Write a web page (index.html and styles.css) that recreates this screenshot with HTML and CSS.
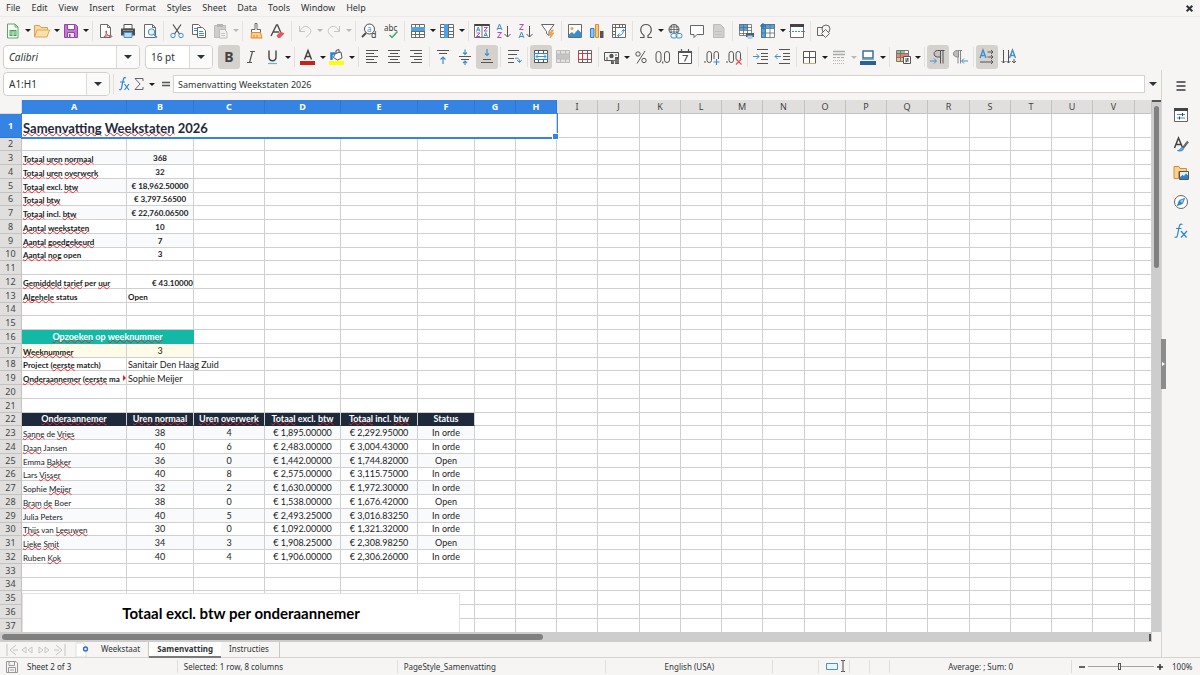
FILE: index.html
```html
<!DOCTYPE html>
<html lang="nl">
<head>
<meta charset="utf-8">
<meta name="viewport" content="width=device-width, initial-scale=1">
<title>Samenvatting</title>
<link rel="stylesheet" href="styles.css">
</head>
<body>
<div class="app">
  <nav class="menubar" aria-label="Menu">
    <button>File</button><button>Edit</button><button>View</button><button>Insert</button><button>Format</button><button>Styles</button><button>Sheet</button><button>Data</button><button>Tools</button><button>Window</button><button>Help</button>
    <button class="close" aria-label="Close document"><svg viewBox="0 0 8 8"><path d="M1.500 1.500l5 5M6.500 1.500l-5 5" stroke="#2e3436" stroke-width="1.800"/></svg></button>
  </nav>

  <div class="toolbar" role="toolbar" aria-label="Standard">
    <button class="tool" aria-label="New"><svg viewBox="0 0 16 16"><path d="M2.500 1h7.500l3 3v11h-10.500z" fill="#fff" stroke="#4fae5d"/><path d="M10 1v3h3" stroke="#4fae5d"/><path d="M4.500 7h7v6h-7z" fill="#43a352"/><path d="M5 9h6M5 11h6M8 9v4" stroke="#c9f0cd"/></svg></button><button class="drop" aria-label="New options"></button>
    <button class="tool" aria-label="Open"><svg viewBox="0 0 16 16"><path d="M.5 14V2.500h5l1.500 2h6.500V7" fill="#fbd9a0" stroke="#dfa04c"/><path d="M.5 14L3 7h12.500l-2.500 7z" fill="#fbe0af" stroke="#e3a652"/></svg></button><button class="drop" aria-label="Open options"></button>
    <button class="tool" aria-label="Save"><svg viewBox="0 0 16 16"><path d="M1.500 1.500h11l2 2v11h-13z" fill="#c178d2" stroke="#97469f"/><path d="M4.500 1.500h7v5h-7z" fill="#fff" stroke="#97469f"/><path d="M4.500 9.500h7v5h-7z" fill="#f5eaf8" stroke="#97469f"/><path d="M6 11h1.500v3H6z" fill="#97469f"/></svg></button><button class="drop" aria-label="Save options"></button>
    <span class="sep"></span>
    <button class="tool" aria-label="Export as PDF"><svg viewBox="0 0 16 16"><path d="M2.500 1.500h7l3 3v10h-10z" fill="#fff" stroke="#6a6a6a"/><path d="M9.500 1.500v3h3" stroke="#6a6a6a"/><path d="M6 14c2-1.500 3-5 2.500-6-.8-.5-1.200.8 0 2.500s3 3.500 5 3.300c1.500-.3 0-1.500-2-1.300S7.500 13 6 14z" stroke="#d34a50" fill="#fbe1e1"/></svg></button>
    <button class="tool" aria-label="Print"><svg viewBox="0 0 16 16"><path d="M4 1.500h8V6H4z" fill="#fff" stroke="#555"/><path d="M1 5.500h14v7H1z" fill="#4a4f52"/><path d="M4 9.500h8v5H4z" fill="#b7dcf6" stroke="#4a90c6"/><path d="M3 7.500h10" stroke="#8b9093"/></svg></button>
    <button class="tool" aria-label="Print preview"><svg viewBox="0 0 16 16"><path d="M2.500 1.500h8l3 3v10h-11z" fill="#fff" stroke="#6a6a6a"/><path d="M10.500 1.500v3h3" stroke="#6a6a6a"/><circle cx="9.500" cy="9" r="3.200" fill="#e3f2fd" stroke="#3d8fd1"/><path d="M12 11.500l3 3" stroke="#3d8fd1" stroke-width="1.500"/></svg></button>
    <span class="sep"></span>
    <button class="tool" aria-label="Cut"><svg viewBox="0 0 16 16"><path d="M4 1.500l6.500 9.500M12 1.500L5.500 11" stroke="#4d4d4d" stroke-width="1.200"/><circle cx="4" cy="12.500" r="2.200" stroke="#3d8fd1"/><circle cx="12" cy="12.500" r="2.200" stroke="#3d8fd1"/></svg></button>
    <button class="tool" aria-label="Copy"><svg viewBox="0 0 16 16"><path d="M1.500 1.500h6l2 2v8h-8z" fill="#fff" stroke="#666"/><path d="M3 5.500h4M3 7.500h3" stroke="#3d8fd1"/><path d="M6.500 4.500h5l3 3v7h-8z" fill="#fff" stroke="#666"/><path d="M8 8.500h4M8 10.500h5M8 12.500h5" stroke="#3d8fd1"/></svg></button>
    <button class="tool" aria-label="Paste" disabled><svg viewBox="0 0 16 16"><path d="M1.500 2.500h11v12h-11z" fill="#cfcecd" stroke="#bdbcbb"/><path d="M4 1h6v3H4z" fill="#b5b4b3"/><path d="M6.500 6.500h5l2.500 2.500v6h-7.500z" fill="#f2f1f0" stroke="#bdbcbb"/><path d="M8 10.500h4M8 12.500h4" stroke="#c8c7c6"/></svg></button><button class="drop" aria-label="Paste options" disabled></button>
    <span class="sep"></span>
    <button class="tool" aria-label="Clone formatting"><svg viewBox="0 0 16 16"><path d="M7 .5h2v6h3.500v3h-9v-3H7z" fill="#fff" stroke="#666"/><path d="M3.500 9.500h9L14 15H3z" fill="#fbd295" stroke="#e08a2c"/><path d="M6 12v3M9 12v3" stroke="#e08a2c"/></svg></button>
    <button class="tool" aria-label="Clear formatting"><svg viewBox="0 0 16 16"><path d="M1 13L6.500 2h1L11 10M3 9h6" stroke="#4d4d4d" stroke-width="1.400"/><path d="M6.500 12.500l4-4 4 2-4.500 4.500h-2z" fill="#e5575a"/></svg></button>
    <span class="sep"></span>
    <button class="tool" aria-label="Undo" disabled><svg viewBox="0 0 16 16"><path d="M2.500 3v5.500h5.500M3 8c2-4 5-5.500 8-4s4 5 1 7.500l-3 3" stroke="#c4c3c2"/></svg></button><button class="drop" aria-label="Undo list" disabled></button>
    <button class="tool" aria-label="Redo" disabled><svg viewBox="0 0 16 16"><path d="M13.500 3v5.500H8M13 8c-2-4-5-5.500-8-4s-4 5-1 7.500l3 3" stroke="#c4c3c2"/></svg></button><button class="drop" aria-label="Redo list" disabled></button>
    <span class="sep"></span>
    <button class="tool" aria-label="Find and replace"><svg viewBox="0 0 16 16"><circle cx="8.500" cy="6" r="5" fill="#fff" stroke="#4d4d4d"/><path d="M5 10l-4 4" stroke="#4d4d4d" stroke-width="2"/><text x="6" y="8.500" font-size="8" fill="#3d8fd1">a</text><text x="10" y="15" font-size="9" fill="#3a3a3a">d</text></svg></button>
    <button class="tool" aria-label="Spelling"><svg viewBox="0 0 16 16"><text x="1" y="8" font-size="8" fill="#3a3a3a">abc</text><path d="M6.500 12l2.500 2.500L14.500 8.500" stroke="#36b26a" stroke-width="1.500"/></svg></button>
    <span class="sep"></span>
    <button class="tool" aria-label="Row"><svg viewBox="0 0 16 16"><path d="M1.500 1.500h13v13h-13z" fill="#fff"/><path d="M1.500 1.500h13v13h-13zM5.500 1.500v13M9.500 1.500v13M1.500 4.500h13M1.500 8.500h13M1.500 11.500h13" stroke="#6a6a6a"/><path d="M1 4h14v4H1z" fill="#4aa5e8"/></svg></button><button class="drop" aria-label="Row options"></button>
    <button class="tool" aria-label="Column"><svg viewBox="0 0 16 16"><path d="M1.500 1.500h13v13h-13z" fill="#fff"/><path d="M1.500 1.500h13v13h-13zM5.500 1.500v13M9.500 1.500v13M1.500 4.500h13M1.500 8.500h13M1.500 11.500h13" stroke="#6a6a6a"/><path d="M5 1h4v14H5z" fill="#4aa5e8"/></svg></button><button class="drop" aria-label="Column options"></button>
    <span class="sep"></span>
    <button class="tool" aria-label="Sort"><svg viewBox="0 0 16 16"><path d="M.5 1.500h15v13H.5zM8 2v12" fill="#fff" stroke="#6a6a6a"/><path d="M.5 2h15" stroke="#444" stroke-width="2"/><path d="M2.500 8.500l1.700-4.500L6 8.500M3 7h2.500M10 13.500l1.700-4L13.500 13.500M10.500 12.500h2.500" stroke="#3d8fd1"/><path d="M2.500 10H6l-3.500 3.500H6M10 4.500h3.500L10 8h3.500" stroke="#b04cc0"/></svg></button>
    <button class="tool" aria-label="Sort ascending"><svg viewBox="0 0 16 16"><path d="M1 7l2.500-6L6 7M2 5.500h3" stroke="#3d8fd1"/><path d="M1.500 9.500h4l-4 5h4" stroke="#b04cc0"/><path d="M11.500 3v11M8.500 11l3 3 3-3" stroke="#555"/></svg></button>
    <button class="tool" aria-label="Sort descending"><svg viewBox="0 0 16 16"><path d="M1 15l2.500-6L6 15M2 13.500h3" stroke="#3d8fd1"/><path d="M1.500 1.500h4l-4 5h4" stroke="#b04cc0"/><path d="M11.500 3v11M8.500 11l3 3 3-3" stroke="#555"/></svg></button>
    <button class="tool" aria-label="AutoFilter"><svg viewBox="0 0 16 16"><path d="M1.500 1.500h12.500L9 8.500v4L6.500 10.500v-2z" fill="#fff" stroke="#666"/><path d="M12 7l-3.500 5h2.500l-1 3 4-5h-2.500l2-3z" fill="#f6a94f" stroke="#e08a2c" stroke-width=".6"/></svg></button>
    <span class="sep"></span>
    <button class="tool" aria-label="Insert image"><svg viewBox="0 0 16 16"><path d="M1.500 1.500h13v13h-13z" fill="#fff" stroke="#6a6a6a"/><circle cx="5" cy="5.500" r="1.500" fill="#f2a33c"/><path d="M2 14v-2.500l3-2.500 2 2 4-4.500 3.500 3.500v4z" fill="#3b8fd0"/></svg></button>
    <button class="tool" aria-label="Insert chart"><svg viewBox="0 0 16 16"><path d="M1.500 5.500h3.500v9H1.500z" fill="#8cc6f3" stroke="#3083c5"/><path d="M6.500 1.500h3v13h-3z" fill="#fbc77d" stroke="#e08a2c"/><path d="M11 8h3.500v7H11z" fill="#555"/></svg></button>
    <button class="tool" aria-label="Pivot table"><svg viewBox="0 0 16 16"><path d="M1.500 1.500h13v13h-13zM1.500 4.500h13M4.500 1.500v13M8.500 1.500v3M11.500 1.500v3M1.500 8.500h3M1.500 11.500h3" fill="#fff" stroke="#6a6a6a"/><path d="M6.500 12.500c4 0 6-2 6-6M10.500 8.500l2-2 2 2M8.500 10.500l-2 2 2 2" stroke="#3d8fd1"/></svg></button>
    <span class="sep"></span>
    <button class="tool" aria-label="Special character"><svg viewBox="0 0 16 16"><path d="M2 14.500h4v-2C1 9 2 1.500 8 1.500S15 9 10 12.500v2h4" stroke="#555" stroke-width="1.200"/></svg></button><button class="drop" aria-label="Special character list"></button>
    <button class="tool" aria-label="Insert hyperlink"><svg viewBox="0 0 16 16"><circle cx="7" cy="6.500" r="5" fill="#fff" stroke="#555"/><path d="M2 6.500h10M7 1.500v10M3 4h8M3 9h8M5 2c-1.500 3-1.500 6 0 9M9 2c1.500 3 1.500 6 0 9" stroke="#555" stroke-width=".8"/><path d="M4 10h12v6H4z" fill="#f6f5f4"/><rect x="4" y="10.500" width="6" height="4.500" rx="2" stroke="#3d8fd1"/><rect x="9" y="10.500" width="6" height="4.500" rx="2" stroke="#3d8fd1"/></svg></button>
    <button class="tool" aria-label="Insert comment"><svg viewBox="0 0 16 16"><path d="M1.500 2.500h13v9H8l-3 3v-3H1.500z" fill="#fff" stroke="#666"/></svg></button>
    <button class="tool" aria-label="Headers and footers" disabled><svg viewBox="0 0 16 16"><path d="M2.500 1.500h7l3.500 3.500v9.500H2.500z" fill="#d2d1d0" stroke="#bbb"/><path d="M4 8.500h7M4 11.500h7" stroke="#c2c1c0"/></svg></button>
    <span class="sep"></span>
    <button class="tool" aria-label="Define print area"><svg viewBox="0 0 16 16"><path d="M1.500 1.500h12v11h-12z" fill="#fff"/><path d="M1 1h9v6H1z" fill="#4aa5e8"/><path d="M1.500 1.500h12v11h-12zM5.500 1.500v11M9.500 1.500v11M1.500 4.500h12M1.500 7.500h12M1.500 10.500h12" stroke="#6a6a6a" stroke-width=".8"/><path d="M8 10h8v4H8z" fill="#4a5f70"/><path d="M9.500 12.500h5V16h-5z" fill="#a9d5f5"/></svg></button>
    <button class="tool" aria-label="Freeze rows and columns"><svg viewBox="0 0 16 16"><path d="M1.500 1.500h13v13h-13z" fill="#fff"/><path d="M1 1h14v4H1zM1 1h5v14H1z" fill="#4aa5e8"/><path d="M1.500 1.500h13v13h-13zM5.500 1.500v13M10 1.500v13M1.500 5.500h13M1.500 10h13" stroke="#5b6a75" stroke-width=".8"/><path d="M3 0v6M0 3h6" stroke="#1f6fb5"/></svg></button><button class="drop" aria-label="Freeze options"></button>
    <button class="tool" aria-label="Split window"><svg viewBox="0 0 16 16"><path d="M1.500 1.500h13v13h-13z" fill="#fff" stroke="#6a6a6a"/><path d="M1 2.500h14" stroke="#444" stroke-width="3"/><path d="M0 8.500h16" stroke="#3d8fd1" stroke-dasharray="2 1"/></svg></button>
    <span class="sep"></span>
    <button class="tool" aria-label="Show draw functions"><svg viewBox="0 0 16 16"><path d="M1.500 4.500h7v8h-7z" stroke="#666"/><circle cx="10" cy="6" r="4" fill="#f6f5f4" stroke="#666"/><path d="M9.500 6.500l4 4-4 4-4-4z" fill="#f6f5f4" stroke="#666"/></svg></button>
  </div>

  <div class="toolbar formatting" role="toolbar" aria-label="Formatting">
    <div class="combo font-name"><input aria-label="Font name" value="Calibri"><button aria-label="Font list"></button></div>
    <div class="combo font-size"><input aria-label="Font size" value="16 pt"><button aria-label="Size list"></button></div>
    <button class="tool bold-tool on" aria-label="Bold">B</button>
    <button class="tool" aria-label="Italic"><svg viewBox="0 0 16 16"><path d="M7 2.500h5M4 13.500h5M9.500 2.500l-3 11" stroke="#555" stroke-width="1.200"/></svg></button>
    <button class="tool" aria-label="Underline"><svg viewBox="0 0 16 16"><path d="M4 1.500v6.500c0 5 7 5 7 0V1.500" stroke="#444" stroke-width="1.400"/><path d="M3 14.500h9" stroke="#6aaee6" stroke-width="1.200"/></svg></button><button class="drop" aria-label="Underline options"></button>
    <span class="sep"></span>
    <button class="tool" aria-label="Font color"><svg viewBox="0 0 16 16"><path d="M4.500 10.500L8 1.500l3.500 9M5.500 7.500h5" stroke="#444" stroke-width="1.500"/><path d="M0 12h15v4H0z" fill="#c9211e"/></svg></button><button class="drop" aria-label="Font color list"></button>
    <button class="tool" aria-label="Background color"><svg viewBox="0 0 16 16"><path d="M6 4.500l6-1.500 1 6-4.500 2-4-2.500z" fill="#fff" stroke="#555"/><path d="M7 5V1.500l3-1v3" stroke="#555"/><path d="M2.500 11V4.500h4" stroke="#2c84cf" stroke-width="2.500"/><path d="M0 12h15v4H0z" fill="#ff0"/></svg></button><button class="drop" aria-label="Background color list"></button>
    <span class="sep"></span>
    <button class="tool" aria-label="Align left"><svg viewBox="0 0 16 16"><path d="M2 1.500h12M2 4.500h8M2 7.500h12M2 10.500h8M2 13.500h11" stroke="#555"/></svg></button>
    <button class="tool" aria-label="Align center"><svg viewBox="0 0 16 16"><path d="M2 1.500h12M4 4.500h8M2 7.500h12M4 10.500h8M2 13.500h12" stroke="#555"/></svg></button>
    <button class="tool" aria-label="Align right"><svg viewBox="0 0 16 16"><path d="M2 1.500h12M6 4.500h8M2 7.500h12M6 10.500h8M3 13.500h11" stroke="#555"/></svg></button>
    <span class="sep"></span>
    <button class="tool" aria-label="Align top"><svg viewBox="0 0 16 16"><path d="M2 1.500h12M4 4.500h8" stroke="#555"/><path d="M8 15V8M5.500 10.500L8 8l2.500 2.500" stroke="#3d8fd1" stroke-width="1.200"/></svg></button>
    <button class="tool" aria-label="Center vertically"><svg viewBox="0 0 16 16"><path d="M2 7.500h12M4 10.500h8" stroke="#555"/><path d="M8 .5v5M6 3.500l2 2 2-2M8 16v-4M6 14l2-2 2 2" stroke="#3d8fd1" stroke-width="1.200"/></svg></button>
    <button class="tool on" aria-label="Align bottom"><svg viewBox="0 0 16 16"><path d="M4 10.500h8M2 13.500h12" stroke="#555"/><path d="M8 0v6.500M6 4.500l2 2 2-2" stroke="#3d8fd1" stroke-width="1.200"/></svg></button>
    <span class="sep"></span>
    <button class="tool" aria-label="Wrap text"><svg viewBox="0 0 16 16"><path d="M2 1.500h11M2 5.500h9M2 9.500h6M2 13.500h6" stroke="#555"/><path d="M9 9.500c3-1 4.500 0 4.500 3.500M11 11l2.500 2.500L15.500 11" stroke="#3d8fd1"/></svg></button>
    <span class="sep"></span>
    <button class="tool on" aria-label="Merge and center"><svg viewBox="0 0 16 16"><path d="M1.500 1.500h13v12h-13zM5.500 1.500v12M10.500 1.500v12" fill="#fff" stroke="#555"/><path d="M1.500 4.500h13v6h-13z" fill="#fff" stroke="#2c84cf"/><path d="M3 7.500h10M5 5.500l-2 2 2 2M11 5.500l2 2-2 2" stroke="#3d8fd1"/></svg></button>
    <button class="tool" aria-label="Merge cells" disabled><svg viewBox="0 0 16 16"><path d="M1.500 1.500h13v12h-13zM5.500 1.500v12M10.500 1.500v12" fill="#e2e1e0" stroke="#bbb"/><path d="M1.500 5h13v5h-13z" fill="#c6c5c4" stroke="#bbb"/></svg></button>
    <button class="tool" aria-label="Unmerge cells"><svg viewBox="0 0 16 16"><path d="M1.500 1.500h13v12h-13zM5.500 1.500v3M10.500 1.500v3M5.500 11v3M10.500 11v3" fill="#fff" stroke="#666"/><path d="M1.500 4.500h13v6h-13zM5.500 4.500v6M10.500 4.500v6" stroke="#d9383c"/></svg></button>
    <span class="sep"></span>
    <button class="tool" aria-label="Currency"><svg viewBox="0 0 16 16"><path d="M.5 3.500h14v8H.5z" stroke="#555"/><circle cx="7.500" cy="7" r="2.200" fill="#555"/><path d="M3 8v3M12 5v2" stroke="#555"/><path d="M7 11h3v4H7zM11 8h4v7h-4z" fill="#555"/><path d="M8 13h7M8 11h7" stroke="#bbb" stroke-width=".6"/></svg></button><button class="drop" aria-label="Currency list"></button>
    <button class="tool" aria-label="Percent"><svg viewBox="0 0 16 16"><circle cx="5" cy="5" r="2.200" stroke="#555"/><circle cx="11" cy="11.500" r="2.200" stroke="#555"/><path d="M12 2L4 14.500" stroke="#555"/></svg></button>
    <button class="tool" aria-label="Number"><svg viewBox="0 0 16 16"><rect x="1" y="2.500" width="5" height="11" rx="2.500" stroke="#555"/><rect x="9.500" y="2.500" width="5" height="11" rx="2.500" stroke="#555"/><path d="M7.700 12.500v2" stroke="#555" stroke-width="1.200"/></svg></button>
    <button class="tool" aria-label="Date"><svg viewBox="0 0 16 16"><path d="M1.500 3.500h13v11h-13z" fill="#fff" stroke="#555"/><path d="M1 3h14" stroke="#555" stroke-width="2"/><path d="M4.500 0v3M11.500 0v3M5.500 6.500h5l-3 6" stroke="#555" stroke-width="1.200"/></svg></button>
    <span class="sep"></span>
    <button class="tool" aria-label="Add decimal place"><svg viewBox="0 0 16 16"><path d="M1 12v2" stroke="#555"/><rect x="3" y="2.500" width="4.500" height="11" rx="2.200" stroke="#555"/><rect x="10" y="2.500" width="4.500" height="11" rx="2.200" stroke="#555"/><path d="M9 10h7v6H9z" fill="#f6f5f4"/><path d="M12.500 10v6M9.500 13h6" stroke="#3d8fd1" stroke-width="1.200"/></svg></button>
    <button class="tool" aria-label="Delete decimal place"><svg viewBox="0 0 16 16"><path d="M1 12v2" stroke="#555"/><rect x="3" y="2.500" width="4.500" height="11" rx="2.200" stroke="#555"/><rect x="10" y="2.500" width="4.500" height="11" rx="2.200" stroke="#555"/><path d="M9 10h7v6H9z" fill="#f6f5f4"/><path d="M10 10l5.500 5.500M15.500 10L10 15.500" stroke="#e05054" stroke-width="1.200"/></svg></button>
    <span class="sep"></span>
    <button class="tool" aria-label="Increase indent"><svg viewBox="0 0 16 16"><path d="M4 .5h11M8 4.500h7M8 7.500h7M8 10.500h7M4 14.500h11" stroke="#555"/><path d="M0 7.500h6M3.500 5L6 7.500 3.500 10" stroke="#3d8fd1"/></svg></button>
    <button class="tool" aria-label="Decrease indent"><svg viewBox="0 0 16 16"><path d="M4 .5h11M8 4.500h7M8 7.500h7M8 10.500h7M4 14.500h11" stroke="#555"/><path d="M0 7.500h6M2.500 5L0 7.500 2.500 10" stroke="#3d8fd1"/></svg></button>
    <span class="sep"></span>
    <button class="tool" aria-label="Borders"><svg viewBox="0 0 16 16"><path d="M1.500 2.500h12v12h-12zM7.500 2.500v12M1.500 8.500h12" fill="#fff" stroke="#555"/><path d="M1 14.500h13" stroke="#e8a15a"/></svg></button><button class="drop" aria-label="Border list"></button>
    <button class="tool" aria-label="Border style" disabled><svg viewBox="0 0 16 16"><path d="M2 2.500h12M2 5.500h12" stroke="#aaa" stroke-width="1.500"/><path d="M2 8.500h12" stroke="#aaa" stroke-dasharray="3 1"/><path d="M2 11.500h12M2 14.500h12" stroke="#b5b5b5" stroke-dasharray="1 1"/></svg></button><button class="drop" aria-label="Border style list" disabled></button>
    <button class="tool" aria-label="Border color"><svg viewBox="0 0 16 16"><path d="M3 2h10v7H3z" fill="#fff" stroke="#3f6f9b" stroke-width="1.500"/><path d="M0 12h16v4H0z" fill="#2a6099"/><path d="M2 10.500h12" stroke="#6ab0ea"/></svg></button><button class="drop" aria-label="Border color list"></button>
    <span class="sep"></span>
    <button class="tool" aria-label="Conditional formatting"><svg viewBox="0 0 16 16"><path d="M1.500 1.500h12v11h-12z" fill="#fff"/><path d="M2 2h8v3H2z" fill="#7bcf8a"/><path d="M2 5h11v3H2z" fill="#ef7d78"/><path d="M2 8h6v4H2z" fill="#f7c178"/><path d="M1.500 1.500h12v11h-12zM5.500 1.500v11M1.500 4.500h12M1.500 8.500h12" stroke="#777"/><path d="M8.500 7.500h7v7h-7z" fill="#fff" stroke="#555"/><path d="M10 10h4M10 12h4M13 9l-2 4.500" stroke="#333" stroke-width=".8"/></svg></button><button class="drop" aria-label="Conditional formatting list"></button>
    <span class="sep"></span>
    <button class="tool on" aria-label="Left to right"><svg viewBox="0 0 16 16"><path d="M14.500 1.500H8M10.500 1.500v13M13 1.500v13" stroke="#555"/><path d="M10.500 1.500H7.500C3 1.500 3 8 7.500 8h3z" fill="#c6c3c0" stroke="#555"/><path d="M0 12h6M4 9.500L6.500 12 4 14.500" stroke="#3d8fd1"/></svg></button>
    <button class="tool" aria-label="Right to left"><svg viewBox="0 0 16 16"><path d="M10 1.500H7M6 1.500v13M8.500 1.500v13" stroke="#888"/><path d="M6.500 1.500h-1C0 1.500 0 8 5.500 8h1z" fill="#bbb" stroke="#888"/><path d="M10 12h6M12 9.500L9.500 12l2.500 2.500" stroke="#3d8fd1"/></svg></button>
    <span class="sep"></span>
    <button class="tool on" aria-label="Text direction left to right"><svg viewBox="0 0 16 16"><path d="M1 9l3-8 3 8M2.500 6.500h3.500" stroke="#3d8fd1" stroke-width="1.400"/><path d="M8.500 3H14M12 1l2 2-2 2M8.500 8H14M12 6l2 2-2 2M1 13h13M12 11l2 2-2 2" stroke="#555"/></svg></button>
    <button class="tool" aria-label="Text direction top to bottom"><svg viewBox="0 0 16 16"><path d="M8.500 9l3-8 3 8M10 6.500h3.500" stroke="#3d8fd1" stroke-width="1.400"/><path d="M2.500 1v13M.5 12l2 2 2-2M7.500 1v13M5.500 12l2 2 2-2M13 10v4M11 12l2 2 2-2" stroke="#555"/></svg></button>
  </div>

  <div class="workspace">
    <main class="document">
      <div class="formula-bar">
        <div class="combo name-box"><input aria-label="Name box" value="A1:H1"><button aria-label="Named ranges"></button></div>
        <span class="sep"></span>
        <button class="mini" aria-label="Function wizard"><svg viewBox="0 0 12 16"><path d="M8 2c-2-1-2.500 0-3 3l-1.500 7c-.5 2-1 2-2.500 1.500M2 6h5" stroke="#2c84cf" stroke-width="1.200"/><path d="M6.500 8l4.500 6M11 8l-4.500 6" stroke="#2c84cf" stroke-width="1.200"/></svg></button>
        <button class="mini" aria-label="Select function"><svg viewBox="0 0 12 16"><path d="M10 5V2.500H2L7 8l-5 5.500h8V11" stroke="#666"/></svg></button><button class="drop" aria-label="Function list"></button>
        <button class="mini equals" aria-label="Formula"><svg viewBox="0 0 12 16"><path d="M2 6.500h8M2 9.500h8" stroke="#555" stroke-width="1.400"/></svg></button>
        <input class="formula" aria-label="Input line" value="Samenvatting Weekstaten 2026">
        <button class="expand" aria-label="Expand formula bar"></button>
      </div>
      <div class="grid-area">
        <div class="pane">
          <table class="sheet">
            <colgroup id="cols"></colgroup>
            <thead id="head"></thead>
            <tbody id="body"></tbody>
          </table>
          <div class="selection"></div>
          <figure class="chart"><figcaption>Totaal excl. btw per onderaannemer</figcaption></figure>
        </div>
        <div class="vscroll"><div class="vthumb"></div></div>
      </div>
      <div class="hscroll"><div class="hthumb"></div><i class="hsplit"></i></div>
      <div class="tabs">
        <svg class="tab-nav" viewBox="0 0 62 14"><path d="M2 1v12M11 2L5 7l6 5M8 7h5M21 4l-4 3 4 3zM27 4l-4 3 4 3zM34 4v6l4-3zM40 4v6l4-3zM51 2l6 5-6 5M49 7h5M60 1v12" stroke="#c6c5c4"/></svg>
        <button class="add" aria-label="Add sheet"><svg viewBox="0 0 14 16"><path d="M1 1h7l3 3v11H1z" fill="#fff" stroke="#dedddb"/><circle cx="10.500" cy="7" r="2" fill="#d8e9fb" stroke="#2f6fc0" stroke-width="1.300"/></svg></button>
        <button class="tab">Weekstaat</button><button class="tab current">Samenvatting</button><button class="tab last">Instructies</button>
      </div>
    </main>
    <aside class="sidebar">
      <button aria-label="Sidebar settings"><svg viewBox="0 0 16 16"><path d="M3.500 4h9M3.500 8h9M3.500 12h9" stroke="#3a3a3a" stroke-width="1.500"/></svg></button>
      <button aria-label="Properties"><svg viewBox="0 0 16 16"><path d="M1.500 2h13v12.500h-13z" fill="#fff" stroke="#666"/><path d="M1 2.500h14" stroke="#444" stroke-width="3"/><path d="M4 7.500h8M4 11h8" stroke="#3d8fd1"/><path d="M9.500 6v3M6.500 9.500v3" stroke="#444"/></svg></button>
      <button aria-label="Styles"><svg viewBox="0 0 16 16"><path d="M1.500 12L5.500 2l4 9.500M3 8.500h5" stroke="#444" stroke-width="1.500"/><path d="M15 5.500L10 12" stroke="#666" stroke-width="2.200"/><path d="M4.500 14.500c3 .5 3-3.500 5.500-3 1.500 2.500-2 4.500-5.500 3z" fill="#66b0ea" stroke="#2c84cf"/></svg></button>
      <button aria-label="Gallery"><svg viewBox="0 0 16 16"><path d="M1 13.500v-12h5l1 2h6.500v3h-8v7z" fill="#fbd295" stroke="#e08a2c"/><path d="M6.500 6.500h9v8h-9z" fill="#dff0fd" stroke="#555"/><path d="M7 14v-2l2.500-2 1.500 1 2-2.500 2 2V14z" fill="#2c84cf"/></svg></button>
      <button aria-label="Navigator"><svg viewBox="0 0 16 16"><circle cx="8" cy="8" r="6.500" fill="#fff" stroke="#666"/><path d="M11.500 4.500L9.500 9.500l-5 2 2-5z" fill="#9fd0f5" stroke="#2c84cf"/><path d="M6.500 6.500l3 3-5 2z" fill="#2c84cf"/></svg></button>
      <button aria-label="Functions"><svg viewBox="0 0 16 16"><path d="M9.500 1.500c-2.500-1-3 .5-3.500 3L4.500 12c-.5 2.500-1 2.500-3 2M3 5.500h5.500" stroke="#2c84cf" stroke-width="1.200"/><path d="M8 8l5.500 6.500M14 8l-6 6.500" stroke="#2c84cf" stroke-width="1.200"/></svg></button>
      <button class="handle" aria-label="Collapse sidebar"></button>
    </aside>
  </div>

  <footer class="status">
    <span class="doc-state"><svg viewBox="0 0 12 12"><path d="M.5 .5h9.500l1.500 1.500v9.500H.5zM3 .5v4h5.500v-4M2.500 11.500v-5h7v5M4 9h4" stroke="#999"/></svg></span>
    <span>Sheet 2 of 3</span>
    <span class="cell">Selected: 1 row, 8 columns</span>
    <span class="cell">PageStyle_Samenvatting</span>
    <span class="cell center">English (USA)</span>
    <span class="cell"></span>
    <span class="cell mode"><svg viewBox="0 0 24 12"><path d="M1.500 3.500h11v6h-11z" fill="#eaf5fe" stroke="#4a90c8"/><path d="M16 .5h1.500l.5.500.5-.5H20M16 11.500h1.500l.5-.5.5.5H20M18 1v10" stroke="#444"/></svg></span>
    <span class="cell"></span>
    <span class="cell"></span>
    <span class="cell center">Average: ; Sum: 0</span>
    <span class="cell zoom"><button aria-label="Zoom out"><svg viewBox="0 0 8 8"><path d="M1 4h6" stroke="#333" stroke-width="1.500"/></svg></button><input type="range" min="0" max="100" value="48" aria-label="Zoom"><button aria-label="Zoom in"><svg viewBox="0 0 8 8"><path d="M1 4h6M4 1v6" stroke="#333" stroke-width="1.500"/></svg></button></span>
    <span class="percent">100%</span>
  </footer>
</div>
<script src="sheet.js"></script>
</body>
</html>
```
FILE: styles.css
```css
* { box-sizing: border-box; }
body { margin: 0; background: #f6f5f4; color: #2e3436; font: 9px/14px "Noto Sans", "Open Sans", sans-serif; overflow: hidden; }
button, input { font: inherit; color: inherit; border: 0; background: none; padding: 0; margin: 0; min-width: 0; }
svg { display: block; fill: none; overflow: visible; font-family: "Noto Sans", sans-serif; }
.app { display: flex; flex-direction: column; height: 100vh; }

.menubar { display: flex; align-items: center; gap: 11px; height: 17px; flex: none; padding: 0 6px; border-bottom: 1px solid #ebeae8; }
.menubar .close { margin-left: auto; }
.menubar .close svg { width: 9px; height: 9px; }

.toolbar { display: flex; align-items: center; flex: none; height: 27px; padding-left: 2px; }
.formatting { height: 26px; padding-left: 3px; }
.tool { display: grid; place-items: center; flex: none; width: 22px; height: 24px; border-radius: 3px; }
.tool svg { width: 16px; height: 16px; }
.tool.on { background: #d5d1cd; }
.bold-tool { font-size: 14px; font-weight: 700; color: #444; }
.drop { display: grid; place-items: center; flex: none; width: 7px; height: 24px; }
.drop::after { content: ""; border: 3px solid transparent; border-top-color: #1d1d1d; border-bottom: 0; }
.drop:disabled::after { border-top-color: #b9b8b6; }
.sep { flex: none; width: 1px; height: 20px; margin: 0 2px; background: #e3e1df; }
.drop + .sep { margin-left: 3px; }

.combo { display: flex; flex: none; height: 24px; background: #fff; border: 1px solid #d3cfcb; border-radius: 4px; overflow: hidden; font-size: 10px; }
.combo input { flex: 1; padding-left: 5px; }
.combo button { display: grid; place-items: center; width: 23px; border-left: 1px solid #dedad6; background: #fbfafa; }
.combo button::after, .expand::after { content: ""; border: 4px solid transparent; border-top-color: #2e3436; border-bottom: 0; }
.font-name { width: 137px; margin-right: 5px; }
.font-name input { font-style: italic; }
.font-size { width: 68px; margin-right: 5px; }
.name-box { width: 107px; margin-right: 1px; }

.workspace { display: flex; flex: 1; min-height: 0; }
.document { display: flex; flex: 1; flex-direction: column; min-width: 0; }
.formula-bar { display: flex; align-items: center; flex: none; height: 30px; padding: 0 1px 2px 3px; }
.mini { flex: none; width: 14px; height: 24px; margin-left: 1px; display: grid; place-items: center; }
.mini svg { width: 12px; height: 16px; }
.mini.equals { margin-left: 4px; }
.formula-bar .drop { margin-left: 2px; }
.formula { flex: 1; height: 18px; padding-left: 4px; background: #fff; border: 1px solid #d5d2cf; }
.expand { display: grid; place-items: center; width: 15px; height: 18px; }

.grid-area { display: flex; flex: 1; min-height: 0; }
.pane { position: relative; flex: 1; min-width: 0; overflow: hidden; background: #fff; }
.sheet { width: 100%; table-layout: fixed; border-collapse: separate; border-spacing: 0; }
.sheet th { padding: 0; font-weight: 400; background: #e0dfde; color: #444; border-right: 1px solid #c4c3c2; border-bottom: 1px solid #c4c3c2; line-height: 12px; font-size: 9px; text-align: center; }
.sheet thead th { height: 14px; }
.sheet thead th:first-child { background: #f6f5f4; border-color: #dddcda; }
.sheet th.sel { background: #3584e4; border-color: #2f78d0; color: #fff; font-weight: 700; }
.sheet td { padding: 0 1px; font: 9px/12px Lato, sans-serif; color: #1b1b1b; white-space: nowrap; border-right: 1px solid #d0d0d0; border-bottom: 1px solid #d0d0d0; }
.sheet tbody tr { height: 14px; }
.sheet tbody tr:nth-child(4n+2) { height: 13px; }
.sheet tbody tr:first-child { height: 24px; }
.sheet td div { height: 12px; line-height: 12px; }
.sheet td.low { font-size: 8px; }
.sheet td.low div { line-height: 15px; }
.sheet td.bold { font-weight: 700; font-size: 8px; }
.sheet td.head { font-weight: 700; }
.sheet td.mid { text-align: center; }
.sheet td.right { text-align: right; padding-right: 0; }
.sheet td.tint { background: #f8fafc; }
.sheet td.teal { background: #14b8a6; border-color: #14b8a6; color: #fff; }
.sheet td.cream { background: #fefce8; }
.sheet td.navy { background: #1e293b; color: #fff; border-bottom-color: #1e293b; }
.sheet td.title div { height: 23px; font-size: 13px; line-height: 29px; color: #1e293b; font-weight: 700; }
.sheet td.spill div { line-height: 14px; }
.sheet td.clip { position: relative; }
.sheet td.clip div { overflow-x: clip; margin-right: 3px; }
.sheet td.clip::after { content: ""; position: absolute; right: 0; top: 4px; border: 3px solid transparent; border-left-color: #d8202a; border-right: 0; }
.typo { text-decoration: underline wavy #e0262b 1px; text-underline-offset: -1px; text-decoration-skip-ink: none; }

.selection { position: absolute; left: 21px; top: 13px; width: 537px; height: 26px; border: 1px solid #3584e4; border-bottom-width: 2px; }
.selection::after { content: ""; position: absolute; right: -2px; bottom: -3px; width: 5px; height: 5px; background: #3584e4; border: 1px solid #fff; }
.chart { position: absolute; left: 22px; top: 493px; width: 438px; height: 280px; margin: 0; padding-top: 7px; background: #fff; border: 1px solid #e2e2e2; text-align: center; font: 700 15px/24px Lato, sans-serif; color: #000; }

.vscroll { flex: none; width: 9px; background: #cdcdcd; border-top: 2px solid #555; padding: 4px 2px; }
.vthumb { width: 5px; height: 31%; background: #7f807f; border-radius: 3px; }
.hscroll { display: flex; align-items: center; flex: none; height: 10px; margin-right: 9px; padding-left: 2px; background: #cdcdcd; }
.hthumb { width: 47%; height: 6px; background: #7f807f; border-radius: 3px; }
.hsplit { width: 2px; height: 7px; margin: 0 1px 0 auto; background: #555; }

.tabs { display: flex; align-items: center; flex: none; height: 16px; border-bottom: 1px solid #d6d3d0; font-size: 8px; }
.tab-nav { width: 62px; height: 14px; margin-left: 5px; }
.add { margin: 0 4px 0 8px; }
.add svg { width: 14px; height: 16px; }
.tab { height: 16px; padding: 0 8px 2px; line-height: 12px; border-right: 1px solid #c9c6c3; }
.tab.current { background: #fff; padding-bottom: 0; font-weight: 700; border-right: 0; border-bottom: 2px solid #7a7a7a; }
.tab.last { padding-right: 10px; }

.sidebar { position: relative; display: flex; flex-direction: column; align-items: center; flex: none; width: 39px; gap: 5px; padding-top: 4px; border-left: 1px solid #d6d3d0; border-bottom: 1px solid #d6d3d0; }
.sidebar button { display: grid; place-items: center; width: 24px; height: 24px; }
.sidebar svg { width: 16px; height: 16px; }
.sidebar .handle { position: absolute; left: -1px; top: 269px; width: 5px; height: 50px; background: #8c8c8c; }
.handle::after { content: ""; border: 2px solid transparent; border-left: 3px solid #fff; border-right: 0; }

.status { display: grid; grid-template-columns: 27px 150fr 220fr 209fr 167fr 46fr 30fr 20fr 20fr 182fr 97px 32px; align-items: center; flex: none; height: 17px; font-size: 8px; }
.doc-state { padding-left: 6px; }
.doc-state svg { width: 12px; height: 12px; }
.cell { height: 13px; line-height: 13px; padding-left: 6px; border-left: 1px solid #e0dedc; white-space: nowrap; }
.center { text-align: center; padding-left: 0; }
.mode svg { width: 24px; height: 12px; }
.zoom { display: flex; align-items: center; gap: 2px; padding-right: 4px; }
.zoom svg { width: 8px; height: 8px; }
.zoom input { appearance: none; flex: 1; height: 10px; background: linear-gradient(#a5a4a2, #a5a4a2) center / 100% 1px no-repeat; }
.zoom input::-webkit-slider-thumb { appearance: none; width: 3px; height: 7px; border: 1px solid #555; background: #f6f5f4; }
.percent { padding-left: 4px; }
```
FILE: sheet.js
```js
// Column widths in pixels; the last column takes the remaining width.
const widths = [22, 105, 67, 71, 76, 77, 57, 41, 41, 41, 42, 41, 41, 41, 42, 41, 41, 41, 42, 41, 41, 41, 42];
const letters = 'ABCDEFGHIJKLMNOPQRSTUV'.split('');

// Text between tildes is underlined by the spell checker.
const cells = {
  A1: ['~Samenvatting~ ~Weekstaten~ 2026', 'title', 8],
  A12: ['~Gemiddeld~ ~tarief~ per ~uur~', 'low bold'], B12: ['€ 43.10000', 'low bold right'],
  A13: ['~Algehele~ status', 'low bold'], B13: ['Open', 'low bold'],
  A16: ['~Opzoeken~ op ~weeknummer~', 'teal mid head', 2],
  A17: ['~Weeknummer~', 'low bold cream'], B17: ['3', 'mid cream'],
  A18: ['Project (~eerste~ match)', 'low bold'], B18: ['Sanitair Den Haag Zuid', 'spill'],
  A19: ['~Onderaannemer~ (~eerste~ ma', 'low bold clip'], B19: ['Sophie Meijer', 'spill']
};

[['~Totaal~ ~uren~ ~normaal~', '368'], ['~Totaal~ ~uren~ ~overwerk~', '32'], ['~Totaal~ excl. ~btw~', '€ 18,962.50000'],
 ['~Totaal~ ~btw~', '€ 3,797.56500'], ['~Totaal~ incl. ~btw~', '€ 22,760.06500'], ['~Aantal~ ~weekstaten~', '10'],
 ['~Aantal~ ~goedgekeurd~', '7'], ['~Aantal~ ~nog~ open', '3']].forEach(([label, value], i) => {
  const tint = i % 2 ? '' : ' tint';
  cells['A' + (i + 3)] = [label, 'low bold' + tint];
  cells['B' + (i + 3)] = [value, 'mid bold' + tint];
});

['~Onderaannemer~', '~Uren~ ~normaal~', '~Uren~ ~overwerk~', '~Totaal~ excl. ~btw~', '~Totaal~ incl. ~btw~', 'Status'].forEach((text, c) => {
  cells[letters[c] + 22] = [text, 'navy mid head'];
});

[['~Sanne~ de ~Vries~', '38', '4', '€ 1,895.00000', '€ 2,292.95000', 'In orde'],
 ['~Daan~ Jansen', '40', '6', '€ 2,483.00000', '€ 3,004.43000', 'In orde'],
 ['Emma ~Bakker~', '36', '0', '€ 1,442.00000', '€ 1,744.82000', 'Open'],
 ['Lars ~Visser~', '40', '8', '€ 2,575.00000', '€ 3,115.75000', 'In orde'],
 ['Sophie ~Meijer~', '32', '2', '€ 1,630.00000', '€ 1,972.30000', 'In orde'],
 ['~Bram~ ~de~ Boer', '38', '0', '€ 1,538.00000', '€ 1,676.42000', 'Open'],
 ['Julia Peters', '40', '5', '€ 2,493.25000', '€ 3,016.83250', 'In orde'],
 ['~Thijs~ van ~Leeuwen~', '30', '0', '€ 1,092.00000', '€ 1,321.32000', 'In orde'],
 ['~Lieke~ ~Smit~', '34', '3', '€ 1,908.25000', '€ 2,308.98250', 'Open'],
 ['Ruben ~Kok~', '40', '4', '€ 1,906.00000', '€ 2,306.26000', 'In orde']].forEach((row, i) => {
  row.forEach((text, c) => {
    cells[letters[c] + (i + 23)] = [text, (c ? 'mid' : 'low') + (i % 2 ? '' : ' tint')];
  });
});

const markup = text => text.replace(/~([^~]+)~/g, '<span class="typo">$1</span>');

document.getElementById('cols').innerHTML = widths.map(w => `<col style="width:${w}px">`).join('') + '<col>';
document.getElementById('head').innerHTML = '<tr><th></th>' +
  letters.map((l, i) => `<th${i < 8 ? ' class="sel"' : ''}>${l}</th>`).join('') + '<th></th></tr>';

let rows = '';
for (let r = 1; r <= 37; r++) {
  rows += `<tr><th${r === 1 ? ' class="sel"' : ''}>${r}</th>`;
  for (let c = 0; c <= letters.length; c++) {
    const cell = cells[letters[c] + r];
    if (!cell) { rows += '<td></td>'; continue; }
    const span = cell[2] || 1;
    rows += `<td class="${cell[1]}"${span > 1 ? ` colspan="${span}"` : ''}><div>${markup(cell[0])}</div></td>`;
    c += span - 1;
  }
  rows += '</tr>';
}
document.getElementById('body').innerHTML = rows;
```
